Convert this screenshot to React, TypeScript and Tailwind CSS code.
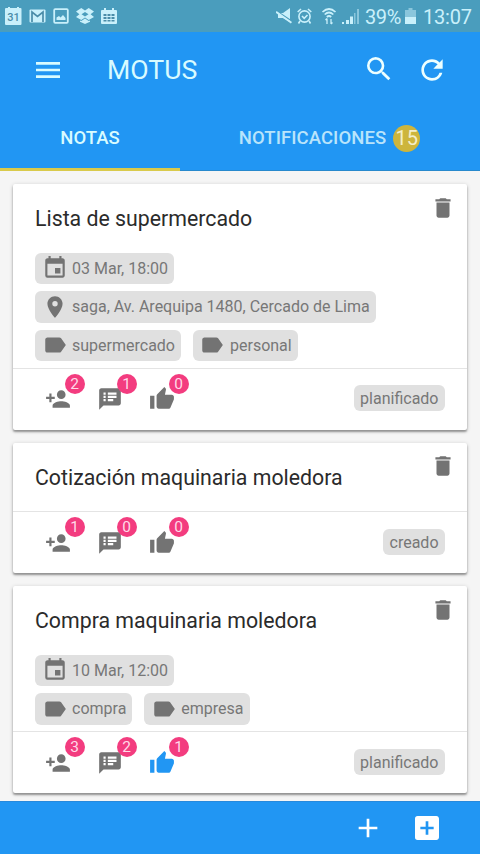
import type { ReactNode } from 'react';
import {
  MdAdd,
  MdAddBox,
  MdDelete,
  MdEvent,
  MdLabel,
  MdMenu,
  MdPersonAdd,
  MdPlace,
  MdRefresh,
  MdSearch,
  MdSpeakerNotes,
  MdThumbUp,
} from 'react-icons/md';

type ChipKind = 'date' | 'place' | 'label';
type Chip = { kind: ChipKind; text: string };
type Note = {
  title: string;
  rows: Chip[][];
  people: number;
  comments: number;
  likes: number;
  liked?: boolean;
  status: string;
};

const notes: Note[] = [
  {
    title: 'Lista de supermercado',
    rows: [
      [{ kind: 'date', text: '03 Mar, 18:00' }],
      [{ kind: 'place', text: 'saga, Av. Arequipa 1480, Cercado de Lima' }],
      [
        { kind: 'label', text: 'supermercado' },
        { kind: 'label', text: 'personal' },
      ],
    ],
    people: 2,
    comments: 1,
    likes: 0,
    status: 'planificado',
  },
  {
    title: 'Cotización maquinaria moledora',
    rows: [],
    people: 1,
    comments: 0,
    likes: 0,
    status: 'creado',
  },
  {
    title: 'Compra maquinaria moledora',
    rows: [
      [{ kind: 'date', text: '10 Mar, 12:00' }],
      [
        { kind: 'label', text: 'compra' },
        { kind: 'label', text: 'empresa' },
      ],
    ],
    people: 3,
    comments: 2,
    likes: 1,
    liked: true,
    status: 'planificado',
  },
];

function StatusBar() {
  return (
    <div className="flex h-8 shrink-0 items-center justify-between bg-[#4a9dbd] pr-[8px] pl-[5px] text-[#c9f0fb]">
      <div className="flex items-center gap-[7px]">
        <svg className="h-[18px] w-[17px]" viewBox="0 0 17 18">
          <path fill="currentColor" d="M2 1h1V0h2v1h7V0h2v1h1.500q1 0 1 1v15q0 1-1 1h-14.500q-1 0-1-1V2q0-1 1-1z" />
          <text x="8.500" y="14" textAnchor="middle" fontSize="11" fontWeight="500" fontFamily="Roboto, sans-serif" fill="#4a8ca8">
            31
          </text>
        </svg>
        <svg className="h-[14px] w-[17px]" viewBox="0 0 17 14">
          <rect x="0.500" y="0.500" width="16" height="13" rx="1" fill="currentColor" />
          <path d="M3 13V3l5.500 4.500L14 3v10" fill="none" stroke="#4a8ca8" strokeWidth="1.700" />
        </svg>
        <svg className="h-4 w-4" viewBox="0 0 16 16">
          <rect x="1.200" y="1.200" width="13.600" height="13.600" rx="1" fill="none" stroke="currentColor" strokeWidth="1.800" />
          <path d="M3.500 12V9.500L6 8l1.500 1.500L10 7l2.500 3v2z" fill="currentColor" />
        </svg>
        <svg className="h-4 w-[18px]" viewBox="0 0 18 16" fill="currentColor">
          <path d="M5.300 0 9 2.600 12.700 0 18 3.500 14.600 6.200 18 9l-5.300 3L9 9.400 5.300 12 0 9l3.400-2.800L0 3.500zM9 4 5.500 6.200 9 8.400l3.500-2.200zM9 10.600l3.700 2.500 1.300-.7v1.300L9 16l-5-2.300v-1.300l1.300.7z" fillRule="evenodd" />
        </svg>
        <svg className="h-4 w-4" viewBox="0 0 16 16">
          <path fill="currentColor" d="M1 2h2V0h2v2h6V0h2v2h2q1 0 1 1v12q0 1-1 1H1q-1 0-1-1V3q0-1 1-1z" />
          <path fill="#4a8ca8" d="M2.500 6h3v2h-3zM6.500 6h3v2h-3zM10.500 6h3v2h-3zM2.500 9h3v2h-3zM6.500 9h3v2h-3zM10.500 9h3v2h-3zM2.500 12h3v1.500h-3zM6.500 12h3v1.500h-3zM10.500 12h3v1.500h-3z" />
        </svg>
      </div>
      <div className="flex items-center">
        <svg className="mr-[5px] h-[18px] w-4" viewBox="0 0 16 18">
          <path fill="currentColor" d="M2 6h5l7-5v14l-7-4H2z" />
          <path d="M0 3.500l16 11" stroke="#4a9dbd" strokeWidth="1.500" />
          <path d="M0 4.800l15.500 11" stroke="currentColor" strokeWidth="2" />
        </svg>
        <svg className="mr-[9px] h-4 w-[15px]" viewBox="0 0 15 16" fill="none" stroke="currentColor" strokeWidth="1.600">
          <circle cx="7.500" cy="8.500" r="5.600" />
          <path d="M5 8l2.200 2.300L10.500 7M.7 4 4 1M14.300 4 11 1M3 13l-1.500 2.500M12 13l1.500 2.500" />
        </svg>
        <svg className="mr-[5px] h-[18px] w-4" viewBox="0 0 16 18" fill="none" stroke="currentColor" strokeWidth="1.700">
          <path d="M1.500 5q6.500-6 13 0M3.700 7.500q4.300-4 8.600 0M5.800 10q2.200-2 4.400 0" />
          <path d="M6 11.500V17M4.500 13 6 11.500M10 12v5M11.500 15.500 10 17" strokeWidth="1.300" />
        </svg>
        <svg className="mr-1.5 h-4 w-[17px]" viewBox="0 0 17 16" fill="currentColor">
          <path d="M0 14h2v2H0zM4 12h3v4H4zM8 8.500h3V16H8z" />
          <path d="M12 5h1.500v11H12zM15 1h2v15h-2z" opacity=".5" />
        </svg>
        <span className="w-[38px] pt-[1px] text-[20px] leading-8 tracking-[-0.4px]">39%</span>
        <svg className="ml-[2px] h-4 w-[11px]" viewBox="0 0 11 16" fill="currentColor">
          <path d="M3.500 0h4v2H11v7H0V2h3.500z" opacity=".5" />
          <path d="M0 9h11v7H0z" />
        </svg>
        <span className="ml-[7px] w-[49px] pt-[1px] text-[20px] leading-8 tracking-[-0.2px]">13:07</span>
      </div>
    </div>
  );
}

function Header() {
  return (
    <header className="h-[139px] shrink-0 bg-[#2196f3] text-[#d8fbff]">
      <div className="flex h-[75px] items-center pr-8 pl-8">
        <MdMenu className="size-8" />
        <h1 className="ml-[43px] text-[26.700px] leading-8">MOTUS</h1>
        <MdSearch className="mb-[1px] ml-auto size-8 text-[#edffff]" />
        <MdRefresh className="ml-[21.500px] size-8 text-[#edffff]" />
      </div>
      <nav className="flex h-16 text-[18.500px] font-medium">
        <div className="flex w-[180px] items-center justify-center border-b-[3px] border-[#d9ca4b] pt-[2px]">NOTAS</div>
        <div className="flex flex-1 items-center justify-center border-b border-[#2789cd] pr-[1px] text-[#b9e4fb]">
          <span className="tracking-[0.08px]">NOTIFICACIONES</span>
          <span className="mb-[1px] ml-[7px] flex size-[27px] items-center justify-center rounded-full bg-[#cdb53c] text-[20px] font-normal text-[#f3eecb]">15</span>
        </div>
      </nav>
    </header>
  );
}

function ChipIcon({ kind }: { kind: ChipKind }) {
  if (kind === 'date') return <MdEvent className="size-[26px] shrink-0" />;
  if (kind === 'place') return <MdPlace className="size-[26px] shrink-0" />;
  return <MdLabel className="size-[26px] shrink-0" />;
}

function Counter({ count, children }: { count: number; children: ReactNode }) {
  return (
    <div className="relative flex w-[52px] items-center">
      {children}
      <span className="absolute -top-[12.500px] left-[19.500px] flex size-5 items-center justify-center rounded-full bg-[#f33c7f] text-[15.500px] leading-5 text-[#ffd9e8]">
        {count}
      </span>
    </div>
  );
}

function NoteCard({ note }: { note: Note }) {
  return (
    <article className="flex shrink-0 flex-col rounded-[2px] bg-white shadow-[0_2px_2px_rgba(0,0,0,0.32),0_1px_4px_rgba(0,0,0,0.2)]">
      <div className="flex h-[68.500px] items-start justify-between pr-[11px] pl-[22px]">
        <h2 className="pt-[21px] text-[21.300px] leading-7 text-[#2b2b2b]">{note.title}</h2>
        <MdDelete className="mt-[10.500px] size-[26px] text-[#737373]" />
      </div>
      {note.rows.length > 0 && (
        <div className="flex flex-col gap-[7px] pb-[6.500px] pl-[22px]">
          {note.rows.map((row, i) => (
            <div key={i} className="flex gap-3">
              {row.map((chip) => (
                <div
                  key={chip.text}
                  className="flex h-[31.500px] items-center rounded-[6px] bg-[#e0e0e0] pr-[6px] pl-[6.500px] text-[16px] whitespace-nowrap text-[#777]"
                >
                  <span className="mr-[4.500px] text-[#737373]">
                    <ChipIcon kind={chip.kind} />
                  </span>
                  <span className="pt-[1px]">{chip.text}</span>
                </div>
              ))}
            </div>
          ))}
        </div>
      )}
      <div className="flex h-[62px] items-center border-t border-[#e4e4e4] pr-[22px] pl-8 text-[#737373]">
        <Counter count={note.people}>
          <MdPersonAdd className="size-[26px]" />
        </Counter>
        <Counter count={note.comments}>
          <MdSpeakerNotes className="size-[26px]" />
        </Counter>
        <Counter count={note.likes}>
          <MdThumbUp className={note.liked ? 'size-[26px] text-[#2196f3]' : 'size-[26px]'} />
        </Counter>
        <span className="mt-[-2px] ml-auto h-[26px] rounded-[6px] bg-[#e0e0e0] px-[6.500px] text-[16px] leading-[27px] text-[#777]">
          {note.status}
        </span>
      </div>
    </article>
  );
}

export default function App() {
  return (
    <div className="flex h-[854px] w-[480px] flex-col overflow-hidden bg-[#f5f5f5] font-['Roboto',sans-serif]">
      <StatusBar />
      <Header />
      <main className="flex min-h-0 flex-1 flex-col gap-[13px] overflow-hidden px-[13px] pt-[13px]">
        {notes.map((note) => (
          <NoteCard key={note.title} note={note} />
        ))}
      </main>
      <footer className="flex h-[53px] shrink-0 items-center justify-end border-t border-[#2789dc] bg-[#2196f3] pr-[37px] text-white">
        <MdAdd className="size-8" />
        <MdAddBox className="ml-[27px] size-8" />
      </footer>
    </div>
  );
}
